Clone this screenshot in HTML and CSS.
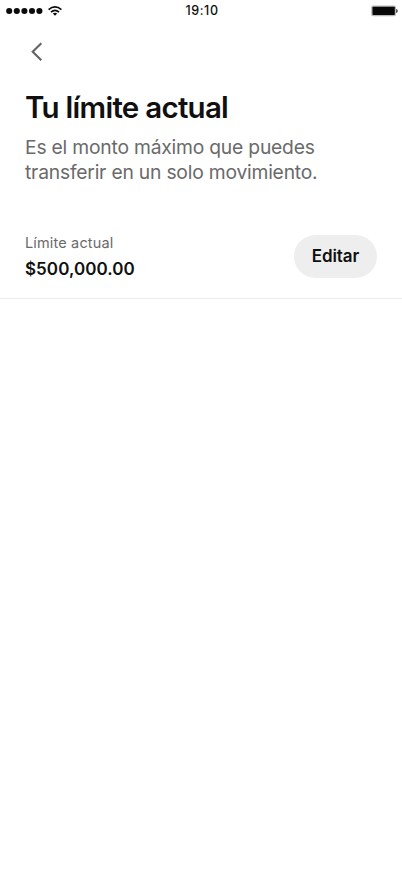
FILE: index.html
```html
<!DOCTYPE html>
<html lang="es">
<head>
<meta charset="utf-8">
<title>Tu límite actual</title>
<link rel="stylesheet" href="styles.css">
</head>
<body>
<div class="status">
  <div class="status-left">
    <svg class="dots" width="38" height="8" viewBox="0 0 38 8"><g fill="#0b0b0b"><circle cx="3.2" cy="4" r="3.05"/><circle cx="10.8" cy="4" r="3.05"/><circle cx="18.4" cy="4" r="3.05"/><circle cx="26" cy="4" r="3.05"/><circle cx="33.4" cy="4" r="3.05"/></g></svg>
    <svg class="wifi" width="14" height="10" viewBox="0 0 14 10"><g fill="none" stroke="#0b0b0b" stroke-width="1.7"><path d="M.6 3.6Q7-1.8 13.4 3.6"/><path d="M3 6.1Q7 2.5 11 6.1"/></g><path fill="#0b0b0b" d="M4.8 7.6Q7 5.8 9.2 7.6L7 9.8Z"/></svg>
  </div>
  <div class="time">19:10</div>
  <svg class="battery" width="27" height="12" viewBox="0 0 27 12"><rect x=".2" y=".5" width="24.8" height="10.8" rx="1.8" fill="#b9b9b9"/><rect x="1.5" y="1.7" width="22.3" height="8.4" rx=".8" fill="#080808"/><path d="M25 4q1.8.2 1.8 2T25 8z" fill="#555"/></svg>
</div>
<nav class="nav">
  <svg width="12" height="20" viewBox="0 0 12 20"><path d="M10.3 1.2 1.7 9.7l8.6 8.6" fill="none" stroke="#636363" stroke-width="2.1"/></svg>
</nav>
<main>
  <h1>Tu límite actual</h1>
  <p class="intro">Es el monto máximo que puedes<br>transferir en un solo movimiento.</p>
  <section class="row">
    <div>
      <div class="label">Límite actual</div>
      <div class="amount">$500,000.00</div>
    </div>
    <button class="edit">Editar</button>
  </section>
</main>
</body>
</html>
```
FILE: styles.css
```css
* { box-sizing: border-box; margin: 0; padding: 0; }
body { background: #fff; color: #101010; font-family: Inter, "Liberation Sans", sans-serif; }
svg { display: block; }
.status { display: grid; grid-template-columns: 1fr auto 1fr; align-items: center; height: 22px; padding: 0 4px 0 6px; }
.status-left { display: flex; gap: 4px; align-items: center; }
.time { font-size: 12.5px; font-weight: 500; line-height: 22px; letter-spacing: 0.6px; }
.battery { justify-self: end; }
.nav { height: 65px; padding: 20px 0 0 31px; }
h1 { height: 40px; padding-left: 25px; font-size: 29.5px; line-height: 40px; font-weight: 600; letter-spacing: -0.73px; white-space: nowrap; }
.intro { height: 50px; margin-top: 8px; padding-left: 25px; font-size: 19.3px; line-height: 25px; letter-spacing: -0.21px; color: #6a6a6a; white-space: nowrap; }
.row { display: flex; justify-content: space-between; height: 114px; padding: 49px 25px 0 25px; border-bottom: 1px solid #ebebeb; }
.label { font-size: 14.5px; line-height: 18px; letter-spacing: 0.15px; color: #6a6a6a; }
.amount { margin-top: 6px; font-size: 17px; line-height: 22px; font-weight: 600; letter-spacing: 0.06px; }
.edit { width: 83px; height: 43px; margin-top: 1px; border: 0; border-radius: 22px; background: #eee; color: #101010; font: 600 17px/22px Inter, "Liberation Sans", sans-serif; letter-spacing: -0.1px; padding-bottom: 2px; }
```
